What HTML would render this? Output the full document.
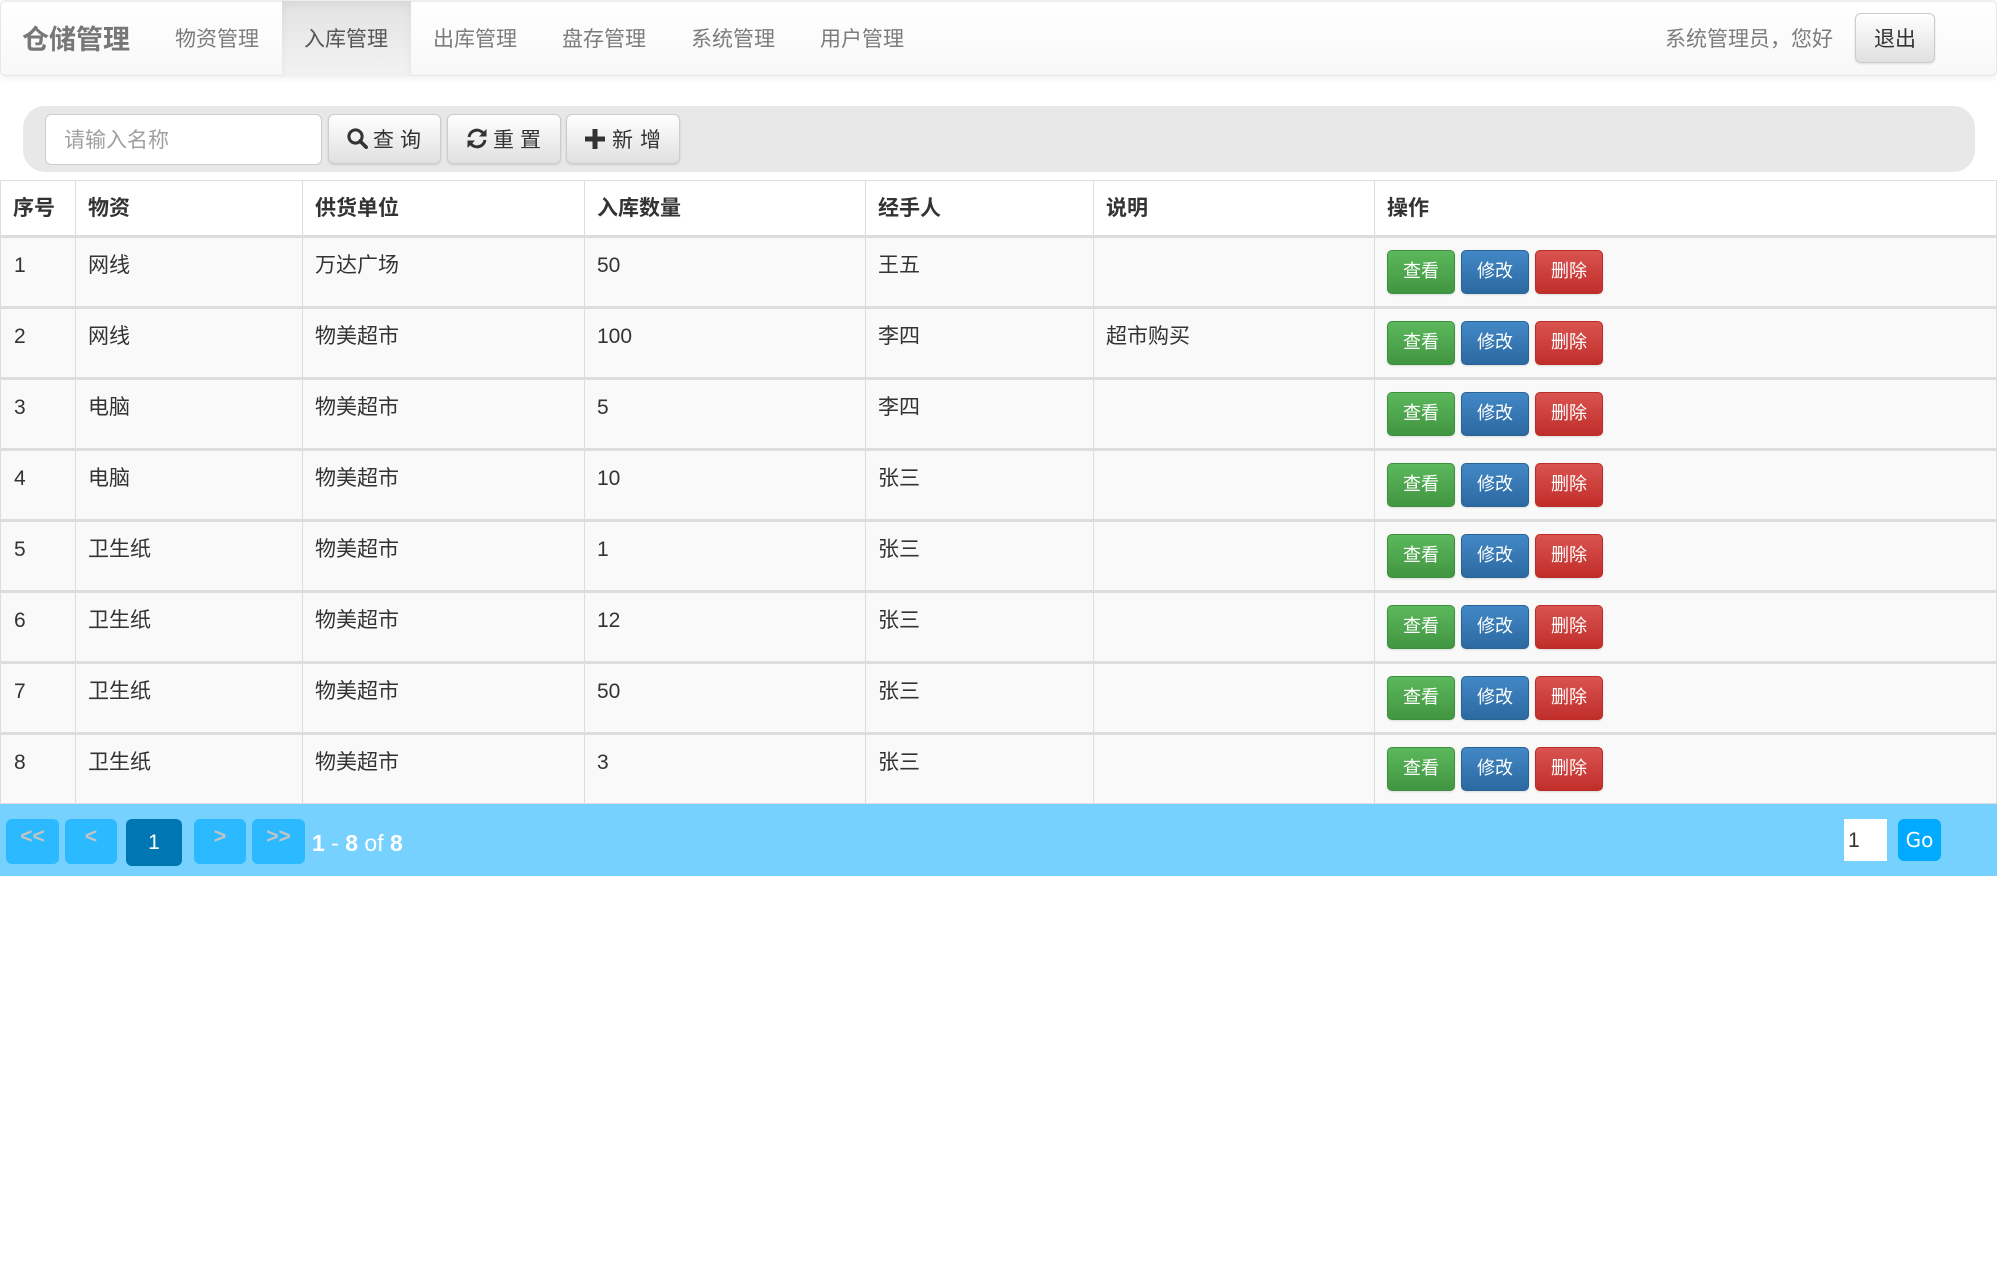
<!DOCTYPE html>
<html lang="zh-CN"><head><meta charset="utf-8"><title>仓储管理</title>
<style>
*{box-sizing:border-box}
html,body{margin:0;padding:0;background:#fff}
body{width:1997px;height:1269px;position:relative;overflow:hidden;font-family:"Liberation Sans","Noto Sans CJK SC",sans-serif;font-size:21px;color:#333}
.a{position:absolute;white-space:nowrap}
#nav{left:0;top:0;width:1997px;height:76px;background:linear-gradient(#fff,#f8f8f8);border:1px solid #e7e7e7;border-top:2px solid #eee;border-radius:6px;box-shadow:0 2px 8px rgba(0,0,0,.07)}
.n{top:25px;line-height:30px;color:#7c7c7c;font-size:21px}
#act{left:282px;top:1px;width:129px;height:75px;background:linear-gradient(#e2e2e2,#f3f3f3);box-shadow:inset 0 3px 9px rgba(0,0,0,.05)}
#bar{left:23px;top:106px;width:1952px;height:66px;background:#e8e8e8;border-radius:22px}
#inp{left:45px;top:114px;width:277px;height:51px;background:#fff;border:1px solid #ccc;border-radius:6px;padding-left:18px;line-height:52px;color:#a0a0a0;font-size:21px}
.b{top:114px;height:50px;background:linear-gradient(#fff,#e0e0e0);border:1px solid #ccc;border-radius:6px;box-shadow:0 1px 2px rgba(0,0,0,.12)}
.t{top:126px;line-height:30px;font-size:21px;color:#333}
.l{width:1px;background:#ddd;top:181px;height:622px}
.r{left:0;width:1997px;height:68px;background:#f9f9f9}
.h{left:0;height:3px;width:1997px;background:#ddd}
.c{top:13px;line-height:30px}
.hd{top:194px;line-height:30px;font-weight:700}
.g,.u,.d{top:12px;width:68px;height:44px;border-radius:5px;color:#fff;font-size:18px;line-height:40px;text-align:center;box-shadow:0 1px 2px rgba(0,0,0,.12)}
.g{left:1387px;background:linear-gradient(#5cb85c,#419641);border:1px solid #3e8f3e}
.u{left:1461px;background:linear-gradient(#4288c6,#2c69a1);border:1px solid #2a6496}
.d{left:1535px;background:linear-gradient(#d9534f,#c12e2a);border:1px solid #b92c28}
#pg{left:0;top:803px;width:1997px;height:73px;background:#77d1ff;border-top:1px solid #ddd}
.p{top:819px;height:45px;background:#2bb9ff;border-radius:6px;color:#c4c4c4;font-weight:700;font-size:21px;line-height:35px;text-align:center}
</style></head><body>
<div class="a" id="nav"></div>
<div class="a" id="act"></div>
<div class="a n" style="left:22px;font-size:27px;font-weight:700;top:24px;line-height:32px;color:#777">仓储管理</div>
<div class="a n" style="left:175px">物资管理</div>
<div class="a n" style="left:304px;color:#555">入库管理</div>
<div class="a n" style="left:433px">出库管理</div>
<div class="a n" style="left:562px">盘存管理</div>
<div class="a n" style="left:691px">系统管理</div>
<div class="a n" style="left:820px">用户管理</div>
<div class="a n" style="left:1665px">系统管理员，您好</div>
<div class="a b" style="left:1855px;top:13px;width:80px;height:50px"></div>
<div class="a n" style="left:1874px;color:#333">退出</div>

<div class="a" id="bar"></div>
<div class="a" id="inp">请输入名称</div>
<div class="a b" style="left:328px;width:113px"></div>
<svg class="a" style="left:347px;top:128px" width="21" height="21" viewBox="0 0 21 21"><circle cx="8.500" cy="8.500" r="6.600" fill="none" stroke="#333" stroke-width="3"/><path d="M13 13l6.200 6.200" stroke="#333" stroke-width="3.600" stroke-linecap="round"/></svg>
<div class="a t" style="left:373px">查</div><div class="a t" style="left:400px">询</div>
<div class="a b" style="left:447px;width:114px"></div>
<svg class="a" style="left:467px;top:128px" width="20" height="21" viewBox="0 0 20 21"><path d="M2 9A8 8 0 0 1 16 5" fill="none" stroke="#333" stroke-width="3"/><path d="M19.500 1v7.500H12z" fill="#333"/><path d="M18 12A8 8 0 0 1 4 16" fill="none" stroke="#333" stroke-width="3"/><path d="M.5 20v-7.500H8z" fill="#333"/></svg>
<div class="a t" style="left:493px">重</div><div class="a t" style="left:520px">置</div>
<div class="a b" style="left:566px;width:114px"></div>
<svg class="a" style="left:585px;top:129px" width="20" height="20" viewBox="0 0 20 20"><path d="M7.500 0h5v7.500H20v5h-7.500V20h-5v-7.500H0v-5h7.500z" fill="#333"/></svg>
<div class="a t" style="left:612px">新</div><div class="a t" style="left:640px">增</div>

<div class="a" style="left:0;top:180px;width:1997px;height:1px;background:#ddd"></div>
<div class="a hd" style="left:13px">序号</div><div class="a hd" style="left:88px">物资</div><div class="a hd" style="left:315px">供货单位</div><div class="a hd" style="left:597px">入库数量</div><div class="a hd" style="left:878px">经手人</div><div class="a hd" style="left:1106px">说明</div><div class="a hd" style="left:1387px">操作</div>
<div class="a h" style="top:235px"></div>

<div class="a r" style="top:238px"><span class="a c" style="left:14px">1</span><span class="a c" style="left:88px">网线</span><span class="a c" style="left:315px">万达广场</span><span class="a c" style="left:597px">50</span><span class="a c" style="left:878px">王五</span><span class="a g">查看</span><span class="a u">修改</span><span class="a d">删除</span></div>
<div class="a h" style="top:306px"></div>
<div class="a r" style="top:309px"><span class="a c" style="left:14px">2</span><span class="a c" style="left:88px">网线</span><span class="a c" style="left:315px">物美超市</span><span class="a c" style="left:597px">100</span><span class="a c" style="left:878px">李四</span><span class="a c" style="left:1106px">超市购买</span><span class="a g">查看</span><span class="a u">修改</span><span class="a d">删除</span></div>
<div class="a h" style="top:377px"></div>
<div class="a r" style="top:380px"><span class="a c" style="left:14px">3</span><span class="a c" style="left:88px">电脑</span><span class="a c" style="left:315px">物美超市</span><span class="a c" style="left:597px">5</span><span class="a c" style="left:878px">李四</span><span class="a g">查看</span><span class="a u">修改</span><span class="a d">删除</span></div>
<div class="a h" style="top:448px"></div>
<div class="a r" style="top:451px"><span class="a c" style="left:14px">4</span><span class="a c" style="left:88px">电脑</span><span class="a c" style="left:315px">物美超市</span><span class="a c" style="left:597px">10</span><span class="a c" style="left:878px">张三</span><span class="a g">查看</span><span class="a u">修改</span><span class="a d">删除</span></div>
<div class="a h" style="top:519px"></div>
<div class="a r" style="top:522px"><span class="a c" style="left:14px">5</span><span class="a c" style="left:88px">卫生纸</span><span class="a c" style="left:315px">物美超市</span><span class="a c" style="left:597px">1</span><span class="a c" style="left:878px">张三</span><span class="a g">查看</span><span class="a u">修改</span><span class="a d">删除</span></div>
<div class="a h" style="top:590px"></div>
<div class="a r" style="top:593px"><span class="a c" style="left:14px">6</span><span class="a c" style="left:88px">卫生纸</span><span class="a c" style="left:315px">物美超市</span><span class="a c" style="left:597px">12</span><span class="a c" style="left:878px">张三</span><span class="a g">查看</span><span class="a u">修改</span><span class="a d">删除</span></div>
<div class="a h" style="top:661px"></div>
<div class="a r" style="top:664px"><span class="a c" style="left:14px">7</span><span class="a c" style="left:88px">卫生纸</span><span class="a c" style="left:315px">物美超市</span><span class="a c" style="left:597px">50</span><span class="a c" style="left:878px">张三</span><span class="a g">查看</span><span class="a u">修改</span><span class="a d">删除</span></div>
<div class="a h" style="top:732px"></div>
<div class="a r" style="top:735px"><span class="a c" style="left:14px">8</span><span class="a c" style="left:88px">卫生纸</span><span class="a c" style="left:315px">物美超市</span><span class="a c" style="left:597px">3</span><span class="a c" style="left:878px">张三</span><span class="a g">查看</span><span class="a u">修改</span><span class="a d">删除</span></div>

<div class="a l" style="left:0"></div><div class="a l" style="left:75px"></div><div class="a l" style="left:302px"></div><div class="a l" style="left:584px"></div><div class="a l" style="left:865px"></div><div class="a l" style="left:1093px"></div><div class="a l" style="left:1374px"></div><div class="a l" style="left:1996px"></div>

<div class="a" id="pg"></div>
<div class="a p" style="left:6px;width:53px">&lt;&lt;</div>
<div class="a p" style="left:65px;width:52px">&lt;</div>
<div class="a p" style="left:126px;width:56px;height:47px;background:#0077b3;color:#fff;font-weight:400;line-height:47px;font-size:21px">1</div>
<div class="a p" style="left:194px;width:52px">&gt;</div>
<div class="a p" style="left:252px;width:53px">&gt;&gt;</div>
<div class="a" style="left:312px;top:829px;line-height:28px;font-size:23px;color:#fff;white-space:nowrap"><b>1</b> - <b>8</b> of <b>8</b></div>
<div class="a" style="left:1844px;top:819px;width:43px;height:42px;background:#fff;padding-left:4px;line-height:44px;color:#333">1</div>
<div class="a" style="left:1898px;top:819px;width:43px;height:42px;background:#0af;border-radius:6px;color:#fff;text-align:center;line-height:43px;font-family:'DejaVu Sans',sans-serif;font-size:20px">Go</div>
</body></html>
